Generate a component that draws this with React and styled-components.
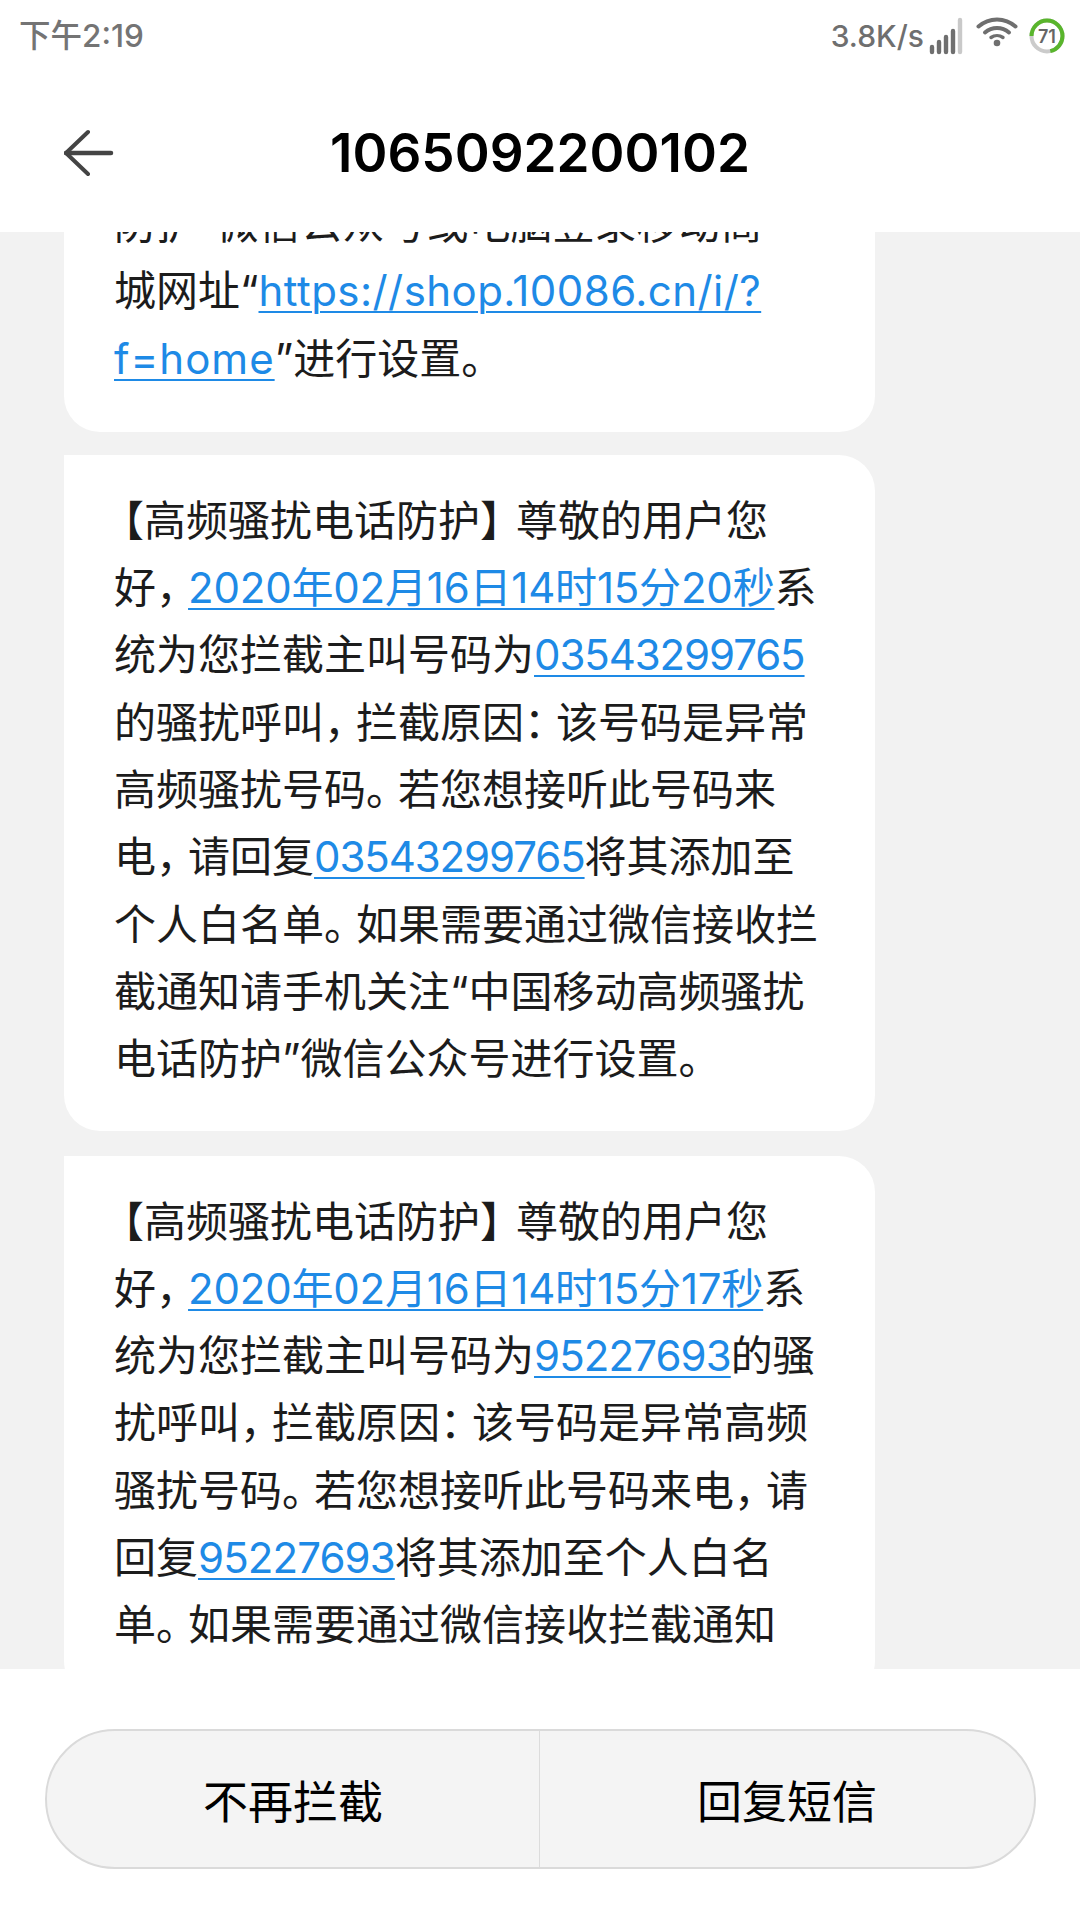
import styled, { createGlobalStyle } from "styled-components";

const GlobalStyle = createGlobalStyle`
  html, body { margin: 0; padding: 0; background: #fff; }
  body { font-family: "Inter", "Noto Sans CJK SC", sans-serif; }
`;

const cards = [
  {
    id: "c1",
    first: true,
    lines: [
      ["防护”微信公众号或电脑登录移动商"],
      ["城网址“", { link: "https://shop.10086.cn/i/?", spacing: 0.45 }],
      [{ link: "f=home", spacing: 1 }, "”进行设置。"],
    ],
  },
  {
    id: "c2",
    lines: [
      ["【高频骚扰电话防护】尊敬的用户您"],
      ["好，", { link: "2020年02月16日14时15分20秒", spacing: -0.2 }, "系"],
      ["统为您拦截主叫号码为", { link: "03543299765", spacing: -1.1 }],
      ["的骚扰呼叫，拦截原因：该号码是异常"],
      ["高频骚扰号码。若您想接听此号码来"],
      ["电，请回复", { link: "03543299765", spacing: -1.1 }, "将其添加至"],
      ["个人白名单。如果需要通过微信接收拦"],
      ["截通知请手机关注“中国移动高频骚扰"],
      ["电话防护”微信公众号进行设置。"],
    ],
  },
  {
    id: "c3",
    lines: [
      ["【高频骚扰电话防护】尊敬的用户您"],
      ["好，", { link: "2020年02月16日14时15分17秒", spacing: -0.2 }, "系"],
      ["统为您拦截主叫号码为", { link: "95227693", spacing: -0.9 }, "的骚"],
      ["扰呼叫，拦截原因：该号码是异常高频"],
      ["骚扰号码。若您想接听此号码来电，请"],
      ["回复", { link: "95227693", spacing: -0.9 }, "将其添加至个人白名"],
      ["单。如果需要通过微信接收拦截通知"],
    ],
  },
];

// the phone's font sets CJK punctuation narrower than a full em
const renderText = (text) =>
  text.split(/([，：。】【])/).map((piece, i) => {
    if (piece === "【") return <OpenBracket key={i}>{piece}</OpenBracket>;
    if (piece === "】") return <CloseBracket key={i}>{piece}</CloseBracket>;
    if (/^[，：。]$/.test(piece)) return <TightMark key={i}>{piece}</TightMark>;
    return piece;
  });

const BackIcon = () => (
  <svg width="50" height="48" viewBox="0 0 50 48" fill="none" stroke="#444" strokeWidth="4" strokeLinecap="round" strokeLinejoin="round">
    <path d="M24 3 L2 24 L24 45" />
    <path d="M2 24 H47" strokeWidth="4.5" />
  </svg>
);

const SignalIcon = () => (
  <svg width="36" height="38" viewBox="0 0 36 38" fill="none" strokeWidth="4.4" strokeLinecap="round">
    <path d="M3 30 V35 M10 25 V35 M17 20 V35 M24 14 V35" stroke="#6f6f6f" />
    <path d="M31 3 V35" stroke="#c9c9c9" />
  </svg>
);

const WifiIcon = () => (
  <svg width="42" height="38" viewBox="0 0 42 38" fill="none" stroke="#6f6f6f" strokeWidth="4" strokeLinecap="round">
    <path d="M2.5 9.5 C13 0 29 0 39.5 9.5" />
    <path d="M9 15.5 C16 9.5 26 9.5 33 15.5" />
    <path d="M15 20.5 C18.5 18 23.5 18 27 20.5" strokeWidth="3.4" />
    <circle cx="21" cy="26" r="3.3" fill="#6f6f6f" stroke="none" />
  </svg>
);

const BatteryIcon = () => (
  <svg width="36" height="36" viewBox="0 0 36 36" fill="none">
    <circle cx="18" cy="18" r="15.5" stroke="#cbcbcb" strokeWidth="4" />
    <circle
      cx="18"
      cy="18"
      r="15.5"
      stroke="#59b52c"
      strokeWidth="4"
      strokeDasharray="69.2 97.4"
      transform="rotate(180 18 18)"
    />
    <text x="18" y="24.5" textAnchor="middle" fontFamily="Inter, sans-serif" fontSize="18" fontWeight="600" fill="#666">
      71
    </text>
  </svg>
);

const App = () => (
  <Screen>
    <GlobalStyle />
    <Header>
      <StatusBar>
        <Clock>下午2:19</Clock>
        <StatusIcons>
          <NetSpeed>3.8K/s</NetSpeed>
          <SignalIcon />
          <WifiIcon />
          <BatteryIcon />
        </StatusIcons>
      </StatusBar>
      <Toolbar>
        <BackButton>
          <BackIcon />
        </BackButton>
        <Title>1065092200102</Title>
      </Toolbar>
    </Header>
    <MessageList>
      {cards.map((card) => (
        <Bubble key={card.id} $first={card.first}>
          {card.lines.map((line, i) => (
            <Line key={i}>
              {line.map((part, j) =>
                typeof part === "string" ? (
                  <span key={j}>{renderText(part)}</span>
                ) : (
                  <MsgLink key={j} $spacing={part.spacing}>
                    {part.link}
                  </MsgLink>
                )
              )}
            </Line>
          ))}
        </Bubble>
      ))}
    </MessageList>
    <ActionBar>
      <ActionGroup>
        <ActionButton>不再拦截</ActionButton>
        <ActionButton $divider>回复短信</ActionButton>
      </ActionGroup>
    </ActionBar>
  </Screen>
);

export default App;

//#region Styled Objects
const Screen = styled.div`
  width: 1080px;
  height: 1920px;
  display: flex;
  flex-direction: column;
  overflow: hidden;
  background: #fff;
`;

const Header = styled.header`
  height: 232px;
  flex: none;
  display: flex;
  flex-direction: column;
  position: relative;
  z-index: 1;
  background: #fff;
`;

const StatusBar = styled.div`
  height: 72px;
  padding: 0 15px 0 19px;
  display: flex;
  align-items: center;
  justify-content: space-between;
`;

const Clock = styled.span`
  font-size: 31.5px;
  font-weight: 500;
  line-height: 72px;
  color: #747474;
`;

const StatusIcons = styled.div`
  display: flex;
  align-items: center;
  gap: 11px;
`;

const NetSpeed = styled.span`
  margin-right: -6px;
  font-size: 30px;
  font-weight: 500;
  line-height: 70px;
  color: #6f6f6f;
`;

const Toolbar = styled.div`
  flex: 1;
  padding: 2px 0 0 64px;
  display: grid;
  grid-template-columns: 50px 1fr 114px;
  align-items: center;
`;

const BackButton = styled.div`
  display: flex;
  align-items: center;
`;

const Title = styled.h1`
  margin: 0;
  text-align: center;
  font-size: 53px;
  font-weight: 600;
  color: #000;
`;

const MessageList = styled.main`
  flex: 1;
  min-height: 0;
  overflow: hidden;
  padding: 0 205px 0 64px;
  display: flex;
  flex-direction: column;
  gap: 25px;
  background: #f2f2f2;
`;

const Bubble = styled.section`
  flex: none;
  margin-top: ${(p) => (p.$first ? "-74px" : "0")};
  margin-bottom: ${(p) => (p.$first ? "-2px" : "0")};
  padding: 32px 50px ${(p) => (p.$first ? "40px" : "38px")};
  background: #fff;
  border-radius: 0 36px 36px 36px;
  font-family: "Inter", "Noto Sans CJK SC", sans-serif;
  font-size: 42px;
  line-height: 67.3px;
  color: #1c1c1c;
`;

const Line = styled.div`
  white-space: nowrap;
`;

const MsgLink = styled.a`
  color: #1e8ae6;
  letter-spacing: ${(p) => p.$spacing || 0}px;
  text-decoration: underline;
  text-decoration-thickness: 2px;
  text-underline-offset: 5px;
`;

const TightMark = styled.span`
  letter-spacing: -10px;
`;

const OpenBracket = styled.span`
  margin-left: -12px;
`;

const CloseBracket = styled.span`
  letter-spacing: -6px;
`;

const ActionBar = styled.footer`
  flex: none;
  height: 251px;
  padding: 60px 44px 0 45px;
  box-sizing: border-box;
  background: #fff;
`;

const ActionGroup = styled.div`
  height: 140px;
  box-sizing: border-box;
  display: grid;
  grid-template-columns: 492px 1fr;
  border: 2px solid #dadada;
  border-radius: 70px;
  background: #f4f4f4;
  overflow: hidden;
`;

const ActionButton = styled.div`
  display: flex;
  align-items: center;
  justify-content: center;
  font-size: 45px;
  font-weight: 400;
  color: #000;
  border-left: ${(p) => (p.$divider ? "1px solid #dcdcdc" : "0")};
`;
//#endregion
